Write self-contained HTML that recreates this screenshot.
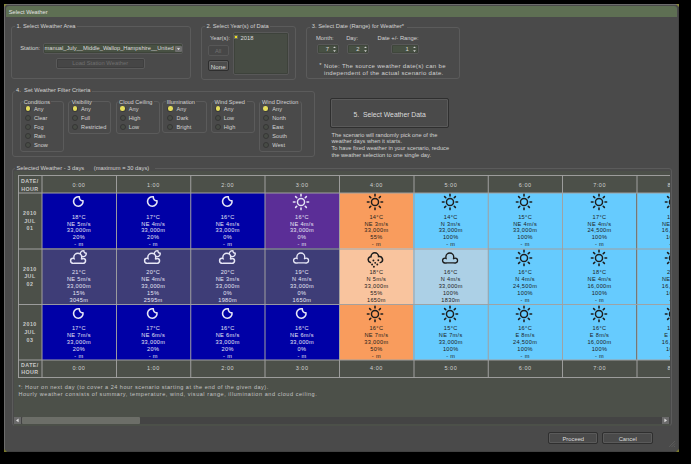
<!DOCTYPE html>
<html><head><meta charset="utf-8"><style>
html,body{margin:0;padding:0}
body{width:691px;height:464px;background:#000;position:relative;overflow:hidden;font-family:"Liberation Sans", sans-serif}
body div, body svg{position:absolute}
.t{white-space:pre;font-family:"Liberation Sans", sans-serif}
</style></head><body>
<div style="left:4px;top:4px;width:675px;height:448px;background:#4a4a4a;border:1px solid #6c6c6c;border-right-color:#424242;border-bottom-color:#424242;box-sizing:border-box;"></div>
<svg style="left:4px;top:4px" width="4" height="4"><path d="M0 0 L3 0 L0 3 Z" fill="#8a8a3a"/></svg>
<svg style="left:675px;top:4px" width="4" height="4"><path d="M4 0 L1 0 L4 3 Z" fill="#8a8a3a"/></svg>
<svg style="left:675px;top:448px" width="4" height="4"><path d="M4 4 L1 4 L4 1 Z" fill="#7a7a2a"/></svg>
<svg style="left:4px;top:448px" width="4" height="4"><path d="M0 4 L3 4 L0 1 Z" fill="#7a7a2a"/></svg>
<div style="left:6px;top:6px;width:671px;height:11px;background:#5e6f53;border-radius:3px 3px 0 0;"></div>
<div class="t" style="left:8.8px;top:9.77px;font-size:5.7px;line-height:5.7px;color:#e2e2e2;">Select Weather</div>
<div style="left:11px;top:26px;width:180px;height:53px;border:1px solid #5b5b5b;border-radius:3px;box-sizing:border-box;"></div>
<div style="left:15.0px;top:23px;width:62.3px;height:6px;background:#4a4a4a"></div>
<div class="t" style="left:16.5px;top:24.13px;font-size:5.75px;line-height:5.75px;color:#d2d2d2;">1. Select Weather Area</div>
<div class="t" style="left:20.2px;top:46.01px;font-size:5.9px;line-height:5.9px;color:#d2d2d2;">Station:</div>
<div style="left:42.8px;top:43.4px;width:140.4px;height:10.4px;background:#485143;border:1px solid #575757;border-radius:2px;box-sizing:border-box;box-shadow:inset 0 0 0 0.7px #3b4138;"></div>
<div class="t" style="left:44.6px;top:46.17px;font-size:5.71px;line-height:5.71px;color:#dcdcdc;">manual_July__Middle_Wallop_Hampshire__United</div>
<div style="left:175px;top:46px;width:6.5px;height:5.8px;background:#6e6e6e;border-radius:1px;"></div>
<svg style="left:176px;top:47px" width="5" height="4"><path d="M1 1.2 L4 1.2 L2.5 3 Z" fill="#eee"/></svg>
<div style="left:55.5px;top:57.8px;width:89.5px;height:11px;border:1px solid #5a5a5a;border-radius:2px;box-sizing:border-box;background:#464646;box-shadow:inset 0 0 0 0.7px #3c3c3c;"></div>
<div class="t" style="left:0.20000000000000284px;width:200px;text-align:center;top:61.09px;font-size:5.8px;line-height:5.8px;color:#6f6f6f;">Load Station Weather</div>
<div style="left:201px;top:26px;width:95px;height:53.5px;border:1px solid #5b5b5b;border-radius:3px;box-sizing:border-box;"></div>
<div style="left:204.9px;top:23px;width:65.3px;height:6px;background:#4a4a4a"></div>
<div class="t" style="left:206.4px;top:24.13px;font-size:5.75px;line-height:5.75px;color:#d2d2d2;">2. Select Year(s) of Data</div>
<div class="t" style="left:-70px;width:300px;text-align:right;top:36.09px;font-size:5.8px;line-height:5.8px;color:#d2d2d2;">Year(s):</div>
<div style="left:232.8px;top:32.2px;width:56px;height:43px;background:#474c44;border:1px solid #585858;border-radius:2px;box-sizing:border-box;box-shadow:inset 0 0 0 0.7px #3b3f38;"></div>
<div style="left:234.2px;top:34.8px;width:4px;height:4px;background:#5a5a3a;box-sizing:border-box;border:1px solid #6d6d5a"></div>
<div style="left:235.2px;top:35.8px;width:2px;height:2px;background:#f0e020"></div>
<div class="t" style="left:240.5px;top:35.89px;font-size:5.8px;line-height:5.8px;color:#dcdcdc;">2018</div>
<div style="left:208px;top:44.5px;width:20.5px;height:11.2px;border:1px solid #575757;border-radius:2px;box-sizing:border-box;background:#474747;"></div>
<div class="t" style="left:118.19999999999999px;width:200px;text-align:center;top:48.79px;font-size:5.8px;line-height:5.8px;color:#707070;">All</div>
<div style="left:208px;top:59.5px;width:20.5px;height:11.4px;border:1px solid #2e2e2e;border-radius:2px;box-sizing:border-box;background:#4c4c4c;box-shadow:inset 0 0 0 1px #5d5d5d;"></div>
<div class="t" style="left:118.19999999999999px;width:200px;text-align:center;top:63.75px;font-size:6.2px;line-height:6.2px;color:#dcdcdc;">None</div>
<div style="left:306px;top:26.5px;width:154px;height:52px;border:1px solid #5b5b5b;border-radius:3px;box-sizing:border-box;"></div>
<div style="left:310.3px;top:23.5px;width:96.5px;height:6px;background:#4a4a4a"></div>
<div class="t" style="left:311.8px;top:24.13px;font-size:5.75px;line-height:5.75px;color:#d2d2d2;">3. Select Date (Range) for Weather*</div>
<div class="t" style="left:316px;top:35.69px;font-size:5.8px;line-height:5.8px;color:#d2d2d2;">Month:</div>
<div class="t" style="left:346.2px;top:35.69px;font-size:5.8px;line-height:5.8px;color:#d2d2d2;">Day:</div>
<div class="t" style="left:377.5px;top:35.69px;font-size:5.8px;line-height:5.8px;color:#d2d2d2;">Date +/- Range:</div>
<div style="left:316.7px;top:43.8px;width:22.2px;height:9.8px;background:#475043;border:1px solid #585858;border-radius:2px;box-sizing:border-box;box-shadow:inset 0 0 0 0.6px #3a3f37;"></div>
<div class="t" style="left:29.099999999999966px;width:300px;text-align:right;top:46.81px;font-size:5.9px;line-height:5.9px;color:#d8d8d8;">7</div>
<svg style="left:332.4px;top:44.5px" width="5" height="8"><path d="M1.1 3.1 L2.5 1.4 L3.9 3.1 Z M1.1 5.2 L2.5 6.9 L3.9 5.2 Z" fill="#cfcfcf"/></svg>
<div style="left:346.7px;top:43.8px;width:22.7px;height:9.8px;background:#475043;border:1px solid #585858;border-radius:2px;box-sizing:border-box;box-shadow:inset 0 0 0 0.6px #3a3f37;"></div>
<div class="t" style="left:59.599999999999966px;width:300px;text-align:right;top:46.81px;font-size:5.9px;line-height:5.9px;color:#d8d8d8;">2</div>
<svg style="left:362.9px;top:44.5px" width="5" height="8"><path d="M1.1 3.1 L2.5 1.4 L3.9 3.1 Z M1.1 5.2 L2.5 6.9 L3.9 5.2 Z" fill="#cfcfcf"/></svg>
<div style="left:391px;top:43.8px;width:27.6px;height:9.8px;background:#475043;border:1px solid #585858;border-radius:2px;box-sizing:border-box;box-shadow:inset 0 0 0 0.6px #3a3f37;"></div>
<div class="t" style="left:108.80000000000001px;width:300px;text-align:right;top:46.81px;font-size:5.9px;line-height:5.9px;color:#d8d8d8;">1</div>
<svg style="left:412.1px;top:44.5px" width="5" height="8"><path d="M1.1 3.1 L2.5 1.4 L3.9 3.1 Z M1.1 5.2 L2.5 6.9 L3.9 5.2 Z" fill="#cfcfcf"/></svg>
<div class="t" style="left:319.2px;top:63.01px;font-size:5.9px;line-height:5.9px;color:#d2d2d2;">*</div>
<div class="t" style="left:324px;top:63.02px;font-size:6.0px;line-height:6.0px;color:#d2d2d2;letter-spacing:0.33px">Note: The source weather date(s) can be</div>
<div class="t" style="left:324px;top:69.72px;font-size:6.0px;line-height:6.0px;color:#d2d2d2;letter-spacing:0.32px">independent of the actual scenario date.</div>
<div style="left:11.5px;top:90.5px;width:303px;height:66px;border:1px solid #5b5b5b;border-radius:3px;box-sizing:border-box;"></div>
<div style="left:14.600000000000001px;top:87.5px;width:77.1px;height:6px;background:#4a4a4a"></div>
<div class="t" style="left:16.1px;top:88.13px;font-size:5.75px;line-height:5.75px;color:#d2d2d2;">4.  Set Weather Filter Criteria</div>
<div style="left:20px;top:101.3px;width:43.6px;height:50.5px;border:1px solid #5b5b5b;border-radius:3px;box-sizing:border-box;"></div>
<div style="left:22.7px;top:99px;width:28.5px;height:6px;background:#4a4a4a"></div>
<div class="t" style="left:23.7px;top:99.76px;font-size:5.6px;line-height:5.6px;color:#d2d2d2;">Conditions</div>
<div style="left:24.95px;top:105.60000000000001px;width:6px;height:6px;border-radius:50%;background:#3a3a3a"></div>
<div style="left:25.75px;top:106.4px;width:4.4px;height:4.4px;border-radius:50%;background:#e4dc5c"></div>
<div class="t" style="left:33.9px;top:107.06px;font-size:5.6px;line-height:5.6px;color:#d2d2d2;">Any</div>
<div style="left:24.95px;top:114.7px;width:6px;height:6px;border-radius:50%;background:#474b45;box-sizing:border-box;border:1px solid #363636"></div>
<div class="t" style="left:33.9px;top:116.16px;font-size:5.6px;line-height:5.6px;color:#d2d2d2;">Clear</div>
<div style="left:24.95px;top:123.80000000000001px;width:6px;height:6px;border-radius:50%;background:#474b45;box-sizing:border-box;border:1px solid #363636"></div>
<div class="t" style="left:33.9px;top:125.26px;font-size:5.6px;line-height:5.6px;color:#d2d2d2;">Fog</div>
<div style="left:24.95px;top:132.89999999999998px;width:6px;height:6px;border-radius:50%;background:#474b45;box-sizing:border-box;border:1px solid #363636"></div>
<div class="t" style="left:33.9px;top:134.36px;font-size:5.6px;line-height:5.6px;color:#d2d2d2;">Rain</div>
<div style="left:24.95px;top:142.0px;width:6px;height:6px;border-radius:50%;background:#474b45;box-sizing:border-box;border:1px solid #363636"></div>
<div class="t" style="left:33.9px;top:143.46px;font-size:5.6px;line-height:5.6px;color:#d2d2d2;">Snow</div>
<div style="left:68.2px;top:101.3px;width:42.8px;height:32.4px;border:1px solid #5b5b5b;border-radius:3px;box-sizing:border-box;"></div>
<div style="left:70.7px;top:99px;width:19px;height:6px;background:#4a4a4a"></div>
<div class="t" style="left:71.7px;top:99.76px;font-size:5.6px;line-height:5.6px;color:#d2d2d2;">Visibility</div>
<div style="left:72.14999999999999px;top:105.60000000000001px;width:6px;height:6px;border-radius:50%;background:#3a3a3a"></div>
<div style="left:72.94999999999999px;top:106.4px;width:4.4px;height:4.4px;border-radius:50%;background:#e4dc5c"></div>
<div class="t" style="left:81.1px;top:107.06px;font-size:5.6px;line-height:5.6px;color:#d2d2d2;">Any</div>
<div style="left:72.14999999999999px;top:114.7px;width:6px;height:6px;border-radius:50%;background:#474b45;box-sizing:border-box;border:1px solid #363636"></div>
<div class="t" style="left:81.1px;top:116.16px;font-size:5.6px;line-height:5.6px;color:#d2d2d2;">Full</div>
<div style="left:72.14999999999999px;top:123.80000000000001px;width:6px;height:6px;border-radius:50%;background:#474b45;box-sizing:border-box;border:1px solid #363636"></div>
<div class="t" style="left:81.1px;top:125.26px;font-size:5.6px;line-height:5.6px;color:#d2d2d2;">Restricted</div>
<div style="left:115.6px;top:101.3px;width:44px;height:32.4px;border:1px solid #5b5b5b;border-radius:3px;box-sizing:border-box;"></div>
<div style="left:118.1px;top:99px;width:35.5px;height:6px;background:#4a4a4a"></div>
<div class="t" style="left:119.1px;top:99.76px;font-size:5.6px;line-height:5.6px;color:#d2d2d2;">Cloud Ceiling</div>
<div style="left:119.55px;top:105.60000000000001px;width:6px;height:6px;border-radius:50%;background:#3a3a3a"></div>
<div style="left:120.35px;top:106.4px;width:4.4px;height:4.4px;border-radius:50%;background:#e4dc5c"></div>
<div class="t" style="left:128.8px;top:107.06px;font-size:5.6px;line-height:5.6px;color:#d2d2d2;">Any</div>
<div style="left:119.55px;top:114.7px;width:6px;height:6px;border-radius:50%;background:#474b45;box-sizing:border-box;border:1px solid #363636"></div>
<div class="t" style="left:128.8px;top:116.16px;font-size:5.6px;line-height:5.6px;color:#d2d2d2;">High</div>
<div style="left:119.55px;top:123.80000000000001px;width:6px;height:6px;border-radius:50%;background:#474b45;box-sizing:border-box;border:1px solid #363636"></div>
<div class="t" style="left:128.8px;top:125.26px;font-size:5.6px;line-height:5.6px;color:#d2d2d2;">Low</div>
<div style="left:162.3px;top:101.3px;width:44.7px;height:31.6px;border:1px solid #5b5b5b;border-radius:3px;box-sizing:border-box;"></div>
<div style="left:165.7px;top:99px;width:30.5px;height:6px;background:#4a4a4a"></div>
<div class="t" style="left:166.7px;top:99.76px;font-size:5.6px;line-height:5.6px;color:#d2d2d2;">Illumination</div>
<div style="left:167.45000000000002px;top:105.60000000000001px;width:6px;height:6px;border-radius:50%;background:#3a3a3a"></div>
<div style="left:168.25000000000003px;top:106.4px;width:4.4px;height:4.4px;border-radius:50%;background:#e4dc5c"></div>
<div class="t" style="left:176.6px;top:107.06px;font-size:5.6px;line-height:5.6px;color:#d2d2d2;">Any</div>
<div style="left:167.45000000000002px;top:114.7px;width:6px;height:6px;border-radius:50%;background:#474b45;box-sizing:border-box;border:1px solid #363636"></div>
<div class="t" style="left:176.6px;top:116.16px;font-size:5.6px;line-height:5.6px;color:#d2d2d2;">Dark</div>
<div style="left:167.45000000000002px;top:123.80000000000001px;width:6px;height:6px;border-radius:50%;background:#474b45;box-sizing:border-box;border:1px solid #363636"></div>
<div class="t" style="left:176.6px;top:125.26px;font-size:5.6px;line-height:5.6px;color:#d2d2d2;">Bright</div>
<div style="left:211px;top:101.3px;width:43.5px;height:31.6px;border:1px solid #5b5b5b;border-radius:3px;box-sizing:border-box;"></div>
<div style="left:213.5px;top:99px;width:33.5px;height:6px;background:#4a4a4a"></div>
<div class="t" style="left:214.5px;top:99.76px;font-size:5.6px;line-height:5.6px;color:#d2d2d2;">Wind Speed</div>
<div style="left:214.95000000000002px;top:105.60000000000001px;width:6px;height:6px;border-radius:50%;background:#3a3a3a"></div>
<div style="left:215.75000000000003px;top:106.4px;width:4.4px;height:4.4px;border-radius:50%;background:#e4dc5c"></div>
<div class="t" style="left:223.8px;top:107.06px;font-size:5.6px;line-height:5.6px;color:#d2d2d2;">Any</div>
<div style="left:214.95000000000002px;top:114.7px;width:6px;height:6px;border-radius:50%;background:#474b45;box-sizing:border-box;border:1px solid #363636"></div>
<div class="t" style="left:223.8px;top:116.16px;font-size:5.6px;line-height:5.6px;color:#d2d2d2;">Low</div>
<div style="left:214.95000000000002px;top:123.80000000000001px;width:6px;height:6px;border-radius:50%;background:#474b45;box-sizing:border-box;border:1px solid #363636"></div>
<div class="t" style="left:223.8px;top:125.26px;font-size:5.6px;line-height:5.6px;color:#d2d2d2;">High</div>
<div style="left:258.7px;top:101.3px;width:43.8px;height:50.5px;border:1px solid #5b5b5b;border-radius:3px;box-sizing:border-box;"></div>
<div style="left:261px;top:99px;width:38.5px;height:6px;background:#4a4a4a"></div>
<div class="t" style="left:262px;top:99.76px;font-size:5.6px;line-height:5.6px;color:#d2d2d2;">Wind Direction</div>
<div style="left:262.65000000000003px;top:105.60000000000001px;width:6px;height:6px;border-radius:50%;background:#3a3a3a"></div>
<div style="left:263.45000000000005px;top:106.4px;width:4.4px;height:4.4px;border-radius:50%;background:#e4dc5c"></div>
<div class="t" style="left:272.3px;top:107.06px;font-size:5.6px;line-height:5.6px;color:#d2d2d2;">Any</div>
<div style="left:262.65000000000003px;top:114.7px;width:6px;height:6px;border-radius:50%;background:#474b45;box-sizing:border-box;border:1px solid #363636"></div>
<div class="t" style="left:272.3px;top:116.16px;font-size:5.6px;line-height:5.6px;color:#d2d2d2;">North</div>
<div style="left:262.65000000000003px;top:123.80000000000001px;width:6px;height:6px;border-radius:50%;background:#474b45;box-sizing:border-box;border:1px solid #363636"></div>
<div class="t" style="left:272.3px;top:125.26px;font-size:5.6px;line-height:5.6px;color:#d2d2d2;">East</div>
<div style="left:262.65000000000003px;top:132.89999999999998px;width:6px;height:6px;border-radius:50%;background:#474b45;box-sizing:border-box;border:1px solid #363636"></div>
<div class="t" style="left:272.3px;top:134.36px;font-size:5.6px;line-height:5.6px;color:#d2d2d2;">South</div>
<div style="left:262.65000000000003px;top:142.0px;width:6px;height:6px;border-radius:50%;background:#474b45;box-sizing:border-box;border:1px solid #363636"></div>
<div class="t" style="left:272.3px;top:143.46px;font-size:5.6px;line-height:5.6px;color:#d2d2d2;">West</div>
<div style="left:330px;top:98.2px;width:119px;height:29.8px;border:1px solid #2f2f2f;border-radius:2px;box-sizing:border-box;background:#4a4a4a;box-shadow:inset 0 0 0 1px #5a5a5a;"></div>
<div class="t" style="left:289.6px;width:200px;text-align:center;top:111.62px;font-size:6.83px;line-height:6.83px;color:#dcdcdc;">5.&nbsp;&nbsp;Select Weather Data</div>
<div class="t" style="left:331.5px;top:132.97px;font-size:5.7px;line-height:5.7px;color:#d2d2d2;">The scenario will randomly pick one of the</div>
<div class="t" style="left:331.5px;top:139.17px;font-size:5.7px;line-height:5.7px;color:#d2d2d2;">weather days when it starts.</div>
<div class="t" style="left:331.5px;top:146.17px;font-size:5.7px;line-height:5.7px;color:#d2d2d2;">To have fixed weather in your scenario, reduce</div>
<div class="t" style="left:331.5px;top:152.67px;font-size:5.7px;line-height:5.7px;color:#d2d2d2;">the weather selection to one single day.</div>
<div style="left:11.5px;top:168px;width:660.5px;height:258px;border:1px solid #5b5b5b;border-radius:3px;box-sizing:border-box;"></div>
<div style="left:13.5px;top:171px;width:656.5px;height:254.5px;background:#4c5049;"></div>
<div style="left:15px;top:165px;width:140px;height:6px;background:#4a4a4a"></div>
<div class="t" style="left:16.5px;top:166.23px;font-size:5.75px;line-height:5.75px;color:#d2d2d2;">Selected Weather - 3 days&nbsp;&nbsp;&nbsp;&nbsp;&nbsp;&nbsp;(maximum = 30 days)</div>
<div style="left:13.5px;top:171px;width:656px;height:210px;overflow:hidden">
<div style="left:28.00px;top:21.50px;width:74.38px;height:55.75px;background:#0000a6"></div>
<div style="left:102.38px;top:21.50px;width:74.38px;height:55.75px;background:#0000a6"></div>
<div style="left:176.75px;top:21.50px;width:74.38px;height:55.75px;background:#0000a6"></div>
<div style="left:251.12px;top:21.50px;width:74.38px;height:55.75px;background:#5b2e97"></div>
<div style="left:325.50px;top:21.50px;width:74.38px;height:55.75px;background:#f99c5d"></div>
<div style="left:399.88px;top:21.50px;width:74.38px;height:55.75px;background:#66cbfe"></div>
<div style="left:474.25px;top:21.50px;width:74.38px;height:55.75px;background:#66cbfe"></div>
<div style="left:548.62px;top:21.50px;width:74.38px;height:55.75px;background:#66cbfe"></div>
<div style="left:623.00px;top:21.50px;width:74.38px;height:55.75px;background:#66cbfe"></div>
<div style="left:28.00px;top:77.25px;width:74.38px;height:55.75px;background:#3e3d77"></div>
<div style="left:102.38px;top:77.25px;width:74.38px;height:55.75px;background:#3e3d77"></div>
<div style="left:176.75px;top:77.25px;width:74.38px;height:55.75px;background:#3e3d77"></div>
<div style="left:251.12px;top:77.25px;width:74.38px;height:55.75px;background:#3e3d77"></div>
<div style="left:325.50px;top:77.25px;width:74.38px;height:55.75px;background:#f9c49e"></div>
<div style="left:399.88px;top:77.25px;width:74.38px;height:55.75px;background:#acd0e6"></div>
<div style="left:474.25px;top:77.25px;width:74.38px;height:55.75px;background:#66cbfe"></div>
<div style="left:548.62px;top:77.25px;width:74.38px;height:55.75px;background:#66cbfe"></div>
<div style="left:623.00px;top:77.25px;width:74.38px;height:55.75px;background:#66cbfe"></div>
<div style="left:28.00px;top:133.00px;width:74.38px;height:55.50px;background:#0000a6"></div>
<div style="left:102.38px;top:133.00px;width:74.38px;height:55.50px;background:#0000a6"></div>
<div style="left:176.75px;top:133.00px;width:74.38px;height:55.50px;background:#0000a6"></div>
<div style="left:251.12px;top:133.00px;width:74.38px;height:55.50px;background:#0000a6"></div>
<div style="left:325.50px;top:133.00px;width:74.38px;height:55.50px;background:#f99c5d"></div>
<div style="left:399.88px;top:133.00px;width:74.38px;height:55.50px;background:#66cbfe"></div>
<div style="left:474.25px;top:133.00px;width:74.38px;height:55.50px;background:#66cbfe"></div>
<div style="left:548.62px;top:133.00px;width:74.38px;height:55.50px;background:#66cbfe"></div>
<div style="left:623.00px;top:133.00px;width:74.38px;height:55.50px;background:#66cbfe"></div>
<div style="left:4.50px;top:4.00px;width:682.00px;height:1.00px;background:rgba(160,160,160,0.95)"></div>
<div style="left:4.50px;top:21.00px;width:682.00px;height:2.00px;background:rgba(160,160,160,0.5)"></div>
<div style="left:4.50px;top:77.00px;width:682.00px;height:2.00px;background:rgba(160,160,160,0.5)"></div>
<div style="left:4.50px;top:133.00px;width:682.00px;height:1.00px;background:rgba(160,160,160,0.95)"></div>
<div style="left:4.50px;top:188.00px;width:682.00px;height:2.00px;background:rgba(160,160,160,0.5)"></div>
<div style="left:4.50px;top:206.00px;width:682.00px;height:1.00px;background:rgba(160,160,160,0.95)"></div>
<div style="left:4.50px;top:4.00px;width:1.00px;height:202.50px;background:rgba(160,160,160,0.95)"></div>
<div style="left:27.50px;top:4.00px;width:2.00px;height:202.50px;background:rgba(160,160,160,0.5)"></div>
<div style="left:102.50px;top:4.00px;width:1.00px;height:202.50px;background:rgba(160,160,160,0.95)"></div>
<div style="left:176.50px;top:4.00px;width:1.00px;height:202.50px;background:rgba(160,160,160,0.75)"></div>
<div style="left:177.50px;top:4.00px;width:1.00px;height:202.50px;background:rgba(160,160,160,0.25)"></div>
<div style="left:250.50px;top:4.00px;width:2.00px;height:202.50px;background:rgba(160,160,160,0.5)"></div>
<div style="left:325.50px;top:4.00px;width:1.00px;height:202.50px;background:rgba(160,160,160,0.95)"></div>
<div style="left:399.50px;top:4.00px;width:2.00px;height:202.50px;background:rgba(160,160,160,0.5)"></div>
<div style="left:473.50px;top:4.00px;width:1.00px;height:202.50px;background:rgba(160,160,160,0.25)"></div>
<div style="left:474.50px;top:4.00px;width:1.00px;height:202.50px;background:rgba(160,160,160,0.75)"></div>
<div style="left:548.50px;top:4.00px;width:1.00px;height:202.50px;background:rgba(160,160,160,0.95)"></div>
<div style="left:622.50px;top:4.00px;width:2.00px;height:202.50px;background:rgba(160,160,160,0.5)"></div>
<div style="left:697.50px;top:4.00px;width:1.00px;height:202.50px;background:rgba(160,160,160,0.95)"></div>
</div>
<div style="left:13.5px;top:171px;width:656px;height:210px;overflow:hidden">
<svg style="left:54.4875px;top:21.099999999999994px;overflow:visible" width="20" height="20"><g transform="translate(10,10)"><g transform="translate(0.3,-0.5)"><path d="M0.99,-4.65 A4.75,4.75 0 1 0 4.7,-0.66 A3.6,3.6 0 0 1 0.99,-4.65 Z" fill="none" stroke="#e6e6f6" stroke-width="1.6" stroke-linejoin="round"/></g></g></svg>
<div class="t" style="left:25.36px;width:80px;text-align:center;top:43.66px;font-size:5.6px;line-height:5.6px;color:#e6e6f6;letter-spacing:0.34px">18°C</div>
<div class="t" style="left:25.36px;width:80px;text-align:center;top:50.51px;font-size:5.6px;line-height:5.6px;color:#e6e6f6;letter-spacing:0.34px">NE 5m/s</div>
<div class="t" style="left:25.36px;width:80px;text-align:center;top:57.36px;font-size:5.6px;line-height:5.6px;color:#e6e6f6;letter-spacing:0.34px">33,000m</div>
<div class="t" style="left:25.36px;width:80px;text-align:center;top:64.21px;font-size:5.6px;line-height:5.6px;color:#e6e6f6;letter-spacing:0.34px">20%</div>
<div class="t" style="left:25.36px;width:80px;text-align:center;top:71.06px;font-size:5.6px;line-height:5.6px;color:#e6e6f6;letter-spacing:0.34px">- m</div>
<svg style="left:128.8625px;top:21.099999999999994px;overflow:visible" width="20" height="20"><g transform="translate(10,10)"><g transform="translate(0.3,-0.5)"><path d="M0.99,-4.65 A4.75,4.75 0 1 0 4.7,-0.66 A3.6,3.6 0 0 1 0.99,-4.65 Z" fill="none" stroke="#e6e6f6" stroke-width="1.6" stroke-linejoin="round"/></g></g></svg>
<div class="t" style="left:99.73px;width:80px;text-align:center;top:43.66px;font-size:5.6px;line-height:5.6px;color:#e6e6f6;letter-spacing:0.34px">17°C</div>
<div class="t" style="left:99.73px;width:80px;text-align:center;top:50.51px;font-size:5.6px;line-height:5.6px;color:#e6e6f6;letter-spacing:0.34px">NE 4m/s</div>
<div class="t" style="left:99.73px;width:80px;text-align:center;top:57.36px;font-size:5.6px;line-height:5.6px;color:#e6e6f6;letter-spacing:0.34px">33,000m</div>
<div class="t" style="left:99.73px;width:80px;text-align:center;top:64.21px;font-size:5.6px;line-height:5.6px;color:#e6e6f6;letter-spacing:0.34px">20%</div>
<div class="t" style="left:99.73px;width:80px;text-align:center;top:71.06px;font-size:5.6px;line-height:5.6px;color:#e6e6f6;letter-spacing:0.34px">- m</div>
<svg style="left:203.2375px;top:21.099999999999994px;overflow:visible" width="20" height="20"><g transform="translate(10,10)"><g transform="translate(0.3,-0.5)"><path d="M0.99,-4.65 A4.75,4.75 0 1 0 4.7,-0.66 A3.6,3.6 0 0 1 0.99,-4.65 Z" fill="none" stroke="#e6e6f6" stroke-width="1.6" stroke-linejoin="round"/></g></g></svg>
<div class="t" style="left:174.11px;width:80px;text-align:center;top:43.66px;font-size:5.6px;line-height:5.6px;color:#e6e6f6;letter-spacing:0.34px">16°C</div>
<div class="t" style="left:174.11px;width:80px;text-align:center;top:50.51px;font-size:5.6px;line-height:5.6px;color:#e6e6f6;letter-spacing:0.34px">NE 4m/s</div>
<div class="t" style="left:174.11px;width:80px;text-align:center;top:57.36px;font-size:5.6px;line-height:5.6px;color:#e6e6f6;letter-spacing:0.34px">33,000m</div>
<div class="t" style="left:174.11px;width:80px;text-align:center;top:64.21px;font-size:5.6px;line-height:5.6px;color:#e6e6f6;letter-spacing:0.34px">0%</div>
<div class="t" style="left:174.11px;width:80px;text-align:center;top:71.06px;font-size:5.6px;line-height:5.6px;color:#e6e6f6;letter-spacing:0.34px">- m</div>
<svg style="left:277.6125px;top:21.099999999999994px;overflow:visible" width="20" height="20"><g transform="translate(10,10)"><circle cx="0" cy="0" r="3.55" fill="none" stroke="#e6e6f6" stroke-width="1.45"/><path d="M6.00,0.00 L7.60,0.00 M4.24,4.24 L5.37,5.37 M0.00,6.00 L0.00,7.60 M-4.24,4.24 L-5.37,5.37 M-6.00,0.00 L-7.60,0.00 M-4.24,-4.24 L-5.37,-5.37 M-0.00,-6.00 L-0.00,-7.60 M4.24,-4.24 L5.37,-5.37" stroke="#e6e6f6" stroke-width="1.6" stroke-linecap="round"/></g></svg>
<div class="t" style="left:248.48px;width:80px;text-align:center;top:43.66px;font-size:5.6px;line-height:5.6px;color:#e6e6f6;letter-spacing:0.34px">16°C</div>
<div class="t" style="left:248.48px;width:80px;text-align:center;top:50.51px;font-size:5.6px;line-height:5.6px;color:#e6e6f6;letter-spacing:0.34px">NE 4m/s</div>
<div class="t" style="left:248.48px;width:80px;text-align:center;top:57.36px;font-size:5.6px;line-height:5.6px;color:#e6e6f6;letter-spacing:0.34px">33,000m</div>
<div class="t" style="left:248.48px;width:80px;text-align:center;top:64.21px;font-size:5.6px;line-height:5.6px;color:#e6e6f6;letter-spacing:0.34px">0%</div>
<div class="t" style="left:248.48px;width:80px;text-align:center;top:71.06px;font-size:5.6px;line-height:5.6px;color:#e6e6f6;letter-spacing:0.34px">- m</div>
<svg style="left:351.9875px;top:21.099999999999994px;overflow:visible" width="20" height="20"><g transform="translate(10,10)"><circle cx="0" cy="0" r="3.55" fill="none" stroke="#1c1c1c" stroke-width="1.45"/><path d="M6.00,0.00 L7.60,0.00 M4.24,4.24 L5.37,5.37 M0.00,6.00 L0.00,7.60 M-4.24,4.24 L-5.37,5.37 M-6.00,0.00 L-7.60,0.00 M-4.24,-4.24 L-5.37,-5.37 M-0.00,-6.00 L-0.00,-7.60 M4.24,-4.24 L5.37,-5.37" stroke="#1c1c1c" stroke-width="1.6" stroke-linecap="round"/></g></svg>
<div class="t" style="left:322.86px;width:80px;text-align:center;top:43.66px;font-size:5.6px;line-height:5.6px;color:#1c1c1c;letter-spacing:0.34px">14°C</div>
<div class="t" style="left:322.86px;width:80px;text-align:center;top:50.51px;font-size:5.6px;line-height:5.6px;color:#1c1c1c;letter-spacing:0.34px">NE 3m/s</div>
<div class="t" style="left:322.86px;width:80px;text-align:center;top:57.36px;font-size:5.6px;line-height:5.6px;color:#1c1c1c;letter-spacing:0.34px">33,000m</div>
<div class="t" style="left:322.86px;width:80px;text-align:center;top:64.21px;font-size:5.6px;line-height:5.6px;color:#1c1c1c;letter-spacing:0.34px">55%</div>
<div class="t" style="left:322.86px;width:80px;text-align:center;top:71.06px;font-size:5.6px;line-height:5.6px;color:#1c1c1c;letter-spacing:0.34px">- m</div>
<svg style="left:426.3625px;top:21.099999999999994px;overflow:visible" width="20" height="20"><g transform="translate(10,10)"><circle cx="0" cy="0" r="3.55" fill="none" stroke="#1c1c1c" stroke-width="1.45"/><path d="M6.00,0.00 L7.60,0.00 M4.24,4.24 L5.37,5.37 M0.00,6.00 L0.00,7.60 M-4.24,4.24 L-5.37,5.37 M-6.00,0.00 L-7.60,0.00 M-4.24,-4.24 L-5.37,-5.37 M-0.00,-6.00 L-0.00,-7.60 M4.24,-4.24 L5.37,-5.37" stroke="#1c1c1c" stroke-width="1.6" stroke-linecap="round"/></g></svg>
<div class="t" style="left:397.23px;width:80px;text-align:center;top:43.66px;font-size:5.6px;line-height:5.6px;color:#1c1c1c;letter-spacing:0.34px">14°C</div>
<div class="t" style="left:397.23px;width:80px;text-align:center;top:50.51px;font-size:5.6px;line-height:5.6px;color:#1c1c1c;letter-spacing:0.34px">N 3m/s</div>
<div class="t" style="left:397.23px;width:80px;text-align:center;top:57.36px;font-size:5.6px;line-height:5.6px;color:#1c1c1c;letter-spacing:0.34px">33,000m</div>
<div class="t" style="left:397.23px;width:80px;text-align:center;top:64.21px;font-size:5.6px;line-height:5.6px;color:#1c1c1c;letter-spacing:0.34px">100%</div>
<div class="t" style="left:397.23px;width:80px;text-align:center;top:71.06px;font-size:5.6px;line-height:5.6px;color:#1c1c1c;letter-spacing:0.34px">- m</div>
<svg style="left:500.73749999999995px;top:21.099999999999994px;overflow:visible" width="20" height="20"><g transform="translate(10,10)"><circle cx="0" cy="0" r="3.55" fill="none" stroke="#1c1c1c" stroke-width="1.45"/><path d="M6.00,0.00 L7.60,0.00 M4.24,4.24 L5.37,5.37 M0.00,6.00 L0.00,7.60 M-4.24,4.24 L-5.37,5.37 M-6.00,0.00 L-7.60,0.00 M-4.24,-4.24 L-5.37,-5.37 M-0.00,-6.00 L-0.00,-7.60 M4.24,-4.24 L5.37,-5.37" stroke="#1c1c1c" stroke-width="1.6" stroke-linecap="round"/></g></svg>
<div class="t" style="left:471.61px;width:80px;text-align:center;top:43.66px;font-size:5.6px;line-height:5.6px;color:#1c1c1c;letter-spacing:0.34px">15°C</div>
<div class="t" style="left:471.61px;width:80px;text-align:center;top:50.51px;font-size:5.6px;line-height:5.6px;color:#1c1c1c;letter-spacing:0.34px">NE 4m/s</div>
<div class="t" style="left:471.61px;width:80px;text-align:center;top:57.36px;font-size:5.6px;line-height:5.6px;color:#1c1c1c;letter-spacing:0.34px">33,000m</div>
<div class="t" style="left:471.61px;width:80px;text-align:center;top:64.21px;font-size:5.6px;line-height:5.6px;color:#1c1c1c;letter-spacing:0.34px">100%</div>
<div class="t" style="left:471.61px;width:80px;text-align:center;top:71.06px;font-size:5.6px;line-height:5.6px;color:#1c1c1c;letter-spacing:0.34px">- m</div>
<svg style="left:575.1125px;top:21.099999999999994px;overflow:visible" width="20" height="20"><g transform="translate(10,10)"><circle cx="0" cy="0" r="3.55" fill="none" stroke="#1c1c1c" stroke-width="1.45"/><path d="M6.00,0.00 L7.60,0.00 M4.24,4.24 L5.37,5.37 M0.00,6.00 L0.00,7.60 M-4.24,4.24 L-5.37,5.37 M-6.00,0.00 L-7.60,0.00 M-4.24,-4.24 L-5.37,-5.37 M-0.00,-6.00 L-0.00,-7.60 M4.24,-4.24 L5.37,-5.37" stroke="#1c1c1c" stroke-width="1.6" stroke-linecap="round"/></g></svg>
<div class="t" style="left:545.98px;width:80px;text-align:center;top:43.66px;font-size:5.6px;line-height:5.6px;color:#1c1c1c;letter-spacing:0.34px">17°C</div>
<div class="t" style="left:545.98px;width:80px;text-align:center;top:50.51px;font-size:5.6px;line-height:5.6px;color:#1c1c1c;letter-spacing:0.34px">NE 4m/s</div>
<div class="t" style="left:545.98px;width:80px;text-align:center;top:57.36px;font-size:5.6px;line-height:5.6px;color:#1c1c1c;letter-spacing:0.34px">24,500m</div>
<div class="t" style="left:545.98px;width:80px;text-align:center;top:64.21px;font-size:5.6px;line-height:5.6px;color:#1c1c1c;letter-spacing:0.34px">100%</div>
<div class="t" style="left:545.98px;width:80px;text-align:center;top:71.06px;font-size:5.6px;line-height:5.6px;color:#1c1c1c;letter-spacing:0.34px">- m</div>
<svg style="left:649.4875px;top:21.099999999999994px;overflow:visible" width="20" height="20"><g transform="translate(10,10)"><circle cx="0" cy="0" r="3.55" fill="none" stroke="#1c1c1c" stroke-width="1.45"/><path d="M6.00,0.00 L7.60,0.00 M4.24,4.24 L5.37,5.37 M0.00,6.00 L0.00,7.60 M-4.24,4.24 L-5.37,5.37 M-6.00,0.00 L-7.60,0.00 M-4.24,-4.24 L-5.37,-5.37 M-0.00,-6.00 L-0.00,-7.60 M4.24,-4.24 L5.37,-5.37" stroke="#1c1c1c" stroke-width="1.6" stroke-linecap="round"/></g></svg>
<div class="t" style="left:620.36px;width:80px;text-align:center;top:43.66px;font-size:5.6px;line-height:5.6px;color:#1c1c1c;letter-spacing:0.34px">18°C</div>
<div class="t" style="left:620.36px;width:80px;text-align:center;top:50.51px;font-size:5.6px;line-height:5.6px;color:#1c1c1c;letter-spacing:0.34px">NE 4m/s</div>
<div class="t" style="left:620.36px;width:80px;text-align:center;top:57.36px;font-size:5.6px;line-height:5.6px;color:#1c1c1c;letter-spacing:0.34px">16,000m</div>
<div class="t" style="left:620.36px;width:80px;text-align:center;top:64.21px;font-size:5.6px;line-height:5.6px;color:#1c1c1c;letter-spacing:0.34px">100%</div>
<div class="t" style="left:620.36px;width:80px;text-align:center;top:71.06px;font-size:5.6px;line-height:5.6px;color:#1c1c1c;letter-spacing:0.34px">- m</div>
<svg style="left:54.4875px;top:76.85000000000002px;overflow:visible" width="20" height="20"><g transform="translate(10,10)"><g transform="translate(5.3,-4.3) scale(0.62)"><path d="M0.99,-4.65 A4.75,4.75 0 1 0 4.7,-0.66 A3.6,3.6 0 0 1 0.99,-4.65 Z" fill="none" stroke="#e6e6f6" stroke-width="2.2"/></g><g fill="#e6e6f6" stroke="#e6e6f6" stroke-width="3.00"><circle cx="-5.00" cy="2.75" r="1.65"/><circle cx="-0.20" cy="-0.70" r="3.20"/><circle cx="5.20" cy="2.80" r="1.60"/><path stroke-linejoin="round" d="M-5.00,2.75 L-0.20,-0.70 L5.20,2.80 L5.20,4.40 L-5.00,4.40 Z"/></g><g fill="#3e3d77"><circle cx="-5.00" cy="2.75" r="1.65"/><circle cx="-0.20" cy="-0.70" r="3.20"/><circle cx="5.20" cy="2.80" r="1.60"/><path stroke-linejoin="round" d="M-5.00,2.75 L-0.20,-0.70 L5.20,2.80 L5.20,4.40 L-5.00,4.40 Z"/></g></g></svg>
<div class="t" style="left:25.36px;width:80px;text-align:center;top:99.41px;font-size:5.6px;line-height:5.6px;color:#e6e6f6;letter-spacing:0.34px">21°C</div>
<div class="t" style="left:25.36px;width:80px;text-align:center;top:106.26px;font-size:5.6px;line-height:5.6px;color:#e6e6f6;letter-spacing:0.34px">NE 5m/s</div>
<div class="t" style="left:25.36px;width:80px;text-align:center;top:113.11px;font-size:5.6px;line-height:5.6px;color:#e6e6f6;letter-spacing:0.34px">33,000m</div>
<div class="t" style="left:25.36px;width:80px;text-align:center;top:119.96px;font-size:5.6px;line-height:5.6px;color:#e6e6f6;letter-spacing:0.34px">15%</div>
<div class="t" style="left:25.36px;width:80px;text-align:center;top:126.81px;font-size:5.6px;line-height:5.6px;color:#e6e6f6;letter-spacing:0.34px">3045m</div>
<svg style="left:128.8625px;top:76.85000000000002px;overflow:visible" width="20" height="20"><g transform="translate(10,10)"><g transform="translate(5.3,-4.3) scale(0.62)"><path d="M0.99,-4.65 A4.75,4.75 0 1 0 4.7,-0.66 A3.6,3.6 0 0 1 0.99,-4.65 Z" fill="none" stroke="#e6e6f6" stroke-width="2.2"/></g><g fill="#e6e6f6" stroke="#e6e6f6" stroke-width="3.00"><circle cx="-5.00" cy="2.75" r="1.65"/><circle cx="-0.20" cy="-0.70" r="3.20"/><circle cx="5.20" cy="2.80" r="1.60"/><path stroke-linejoin="round" d="M-5.00,2.75 L-0.20,-0.70 L5.20,2.80 L5.20,4.40 L-5.00,4.40 Z"/></g><g fill="#3e3d77"><circle cx="-5.00" cy="2.75" r="1.65"/><circle cx="-0.20" cy="-0.70" r="3.20"/><circle cx="5.20" cy="2.80" r="1.60"/><path stroke-linejoin="round" d="M-5.00,2.75 L-0.20,-0.70 L5.20,2.80 L5.20,4.40 L-5.00,4.40 Z"/></g></g></svg>
<div class="t" style="left:99.73px;width:80px;text-align:center;top:99.41px;font-size:5.6px;line-height:5.6px;color:#e6e6f6;letter-spacing:0.34px">20°C</div>
<div class="t" style="left:99.73px;width:80px;text-align:center;top:106.26px;font-size:5.6px;line-height:5.6px;color:#e6e6f6;letter-spacing:0.34px">NE 4m/s</div>
<div class="t" style="left:99.73px;width:80px;text-align:center;top:113.11px;font-size:5.6px;line-height:5.6px;color:#e6e6f6;letter-spacing:0.34px">33,000m</div>
<div class="t" style="left:99.73px;width:80px;text-align:center;top:119.96px;font-size:5.6px;line-height:5.6px;color:#e6e6f6;letter-spacing:0.34px">15%</div>
<div class="t" style="left:99.73px;width:80px;text-align:center;top:126.81px;font-size:5.6px;line-height:5.6px;color:#e6e6f6;letter-spacing:0.34px">2595m</div>
<svg style="left:203.2375px;top:76.85000000000002px;overflow:visible" width="20" height="20"><g transform="translate(10,10)"><g transform="translate(5.3,-4.3) scale(0.62)"><path d="M0.99,-4.65 A4.75,4.75 0 1 0 4.7,-0.66 A3.6,3.6 0 0 1 0.99,-4.65 Z" fill="none" stroke="#e6e6f6" stroke-width="2.2"/></g><g fill="#e6e6f6" stroke="#e6e6f6" stroke-width="3.00"><circle cx="-5.00" cy="2.75" r="1.65"/><circle cx="-0.20" cy="-0.70" r="3.20"/><circle cx="5.20" cy="2.80" r="1.60"/><path stroke-linejoin="round" d="M-5.00,2.75 L-0.20,-0.70 L5.20,2.80 L5.20,4.40 L-5.00,4.40 Z"/></g><g fill="#3e3d77"><circle cx="-5.00" cy="2.75" r="1.65"/><circle cx="-0.20" cy="-0.70" r="3.20"/><circle cx="5.20" cy="2.80" r="1.60"/><path stroke-linejoin="round" d="M-5.00,2.75 L-0.20,-0.70 L5.20,2.80 L5.20,4.40 L-5.00,4.40 Z"/></g></g></svg>
<div class="t" style="left:174.11px;width:80px;text-align:center;top:99.41px;font-size:5.6px;line-height:5.6px;color:#e6e6f6;letter-spacing:0.34px">20°C</div>
<div class="t" style="left:174.11px;width:80px;text-align:center;top:106.26px;font-size:5.6px;line-height:5.6px;color:#e6e6f6;letter-spacing:0.34px">NE 3m/s</div>
<div class="t" style="left:174.11px;width:80px;text-align:center;top:113.11px;font-size:5.6px;line-height:5.6px;color:#e6e6f6;letter-spacing:0.34px">33,000m</div>
<div class="t" style="left:174.11px;width:80px;text-align:center;top:119.96px;font-size:5.6px;line-height:5.6px;color:#e6e6f6;letter-spacing:0.34px">0%</div>
<div class="t" style="left:174.11px;width:80px;text-align:center;top:126.81px;font-size:5.6px;line-height:5.6px;color:#e6e6f6;letter-spacing:0.34px">1980m</div>
<svg style="left:277.6125px;top:76.85000000000002px;overflow:visible" width="20" height="20"><g transform="translate(10,10)"><g fill="#e6e6f6" stroke="#e6e6f6" stroke-width="2.70"><circle cx="-5.00" cy="2.45" r="1.72"/><circle cx="-0.20" cy="-1.00" r="3.28"/><circle cx="5.20" cy="2.50" r="1.68"/><path stroke-linejoin="round" d="M-5.00,2.45 L-0.20,-1.00 L5.20,2.50 L5.20,4.17 L-5.00,4.17 Z"/></g><g fill="#3e3d77"><circle cx="-5.00" cy="2.45" r="1.72"/><circle cx="-0.20" cy="-1.00" r="3.28"/><circle cx="5.20" cy="2.50" r="1.68"/><path stroke-linejoin="round" d="M-5.00,2.45 L-0.20,-1.00 L5.20,2.50 L5.20,4.17 L-5.00,4.17 Z"/></g></g></svg>
<div class="t" style="left:248.48px;width:80px;text-align:center;top:99.41px;font-size:5.6px;line-height:5.6px;color:#e6e6f6;letter-spacing:0.34px">19°C</div>
<div class="t" style="left:248.48px;width:80px;text-align:center;top:106.26px;font-size:5.6px;line-height:5.6px;color:#e6e6f6;letter-spacing:0.34px">N 4m/s</div>
<div class="t" style="left:248.48px;width:80px;text-align:center;top:113.11px;font-size:5.6px;line-height:5.6px;color:#e6e6f6;letter-spacing:0.34px">33,000m</div>
<div class="t" style="left:248.48px;width:80px;text-align:center;top:119.96px;font-size:5.6px;line-height:5.6px;color:#e6e6f6;letter-spacing:0.34px">0%</div>
<div class="t" style="left:248.48px;width:80px;text-align:center;top:126.81px;font-size:5.6px;line-height:5.6px;color:#e6e6f6;letter-spacing:0.34px">1650m</div>
<svg style="left:351.9875px;top:76.85000000000002px;overflow:visible" width="20" height="20"><g transform="translate(10,10)"><path d="M-4.6,4.5 A2.95,2.95 0 0 1 -4.0,-1.3 A3.72,3.72 0 0 1 3.6,-1.4 A3.1,3.1 0 0 1 5.2,4.6" fill="none" stroke="#1c1c1c" stroke-width="1.5" stroke-linecap="round"/><circle cx="-1.6" cy="2.55" r="0.95" fill="#1c1c1c"/><circle cx="3.3" cy="2.25" r="0.95" fill="#1c1c1c"/><circle cx="0.2" cy="4.85" r="0.95" fill="#1c1c1c"/><circle cx="-2.9" cy="6.45" r="0.95" fill="#1c1c1c"/><circle cx="2.3" cy="6.45" r="0.95" fill="#1c1c1c"/><circle cx="-1.1" cy="8.75" r="0.95" fill="#1c1c1c"/></g></svg>
<div class="t" style="left:322.86px;width:80px;text-align:center;top:99.41px;font-size:5.6px;line-height:5.6px;color:#1c1c1c;letter-spacing:0.34px">18°C</div>
<div class="t" style="left:322.86px;width:80px;text-align:center;top:106.26px;font-size:5.6px;line-height:5.6px;color:#1c1c1c;letter-spacing:0.34px">N 5m/s</div>
<div class="t" style="left:322.86px;width:80px;text-align:center;top:113.11px;font-size:5.6px;line-height:5.6px;color:#1c1c1c;letter-spacing:0.34px">33,000m</div>
<div class="t" style="left:322.86px;width:80px;text-align:center;top:119.96px;font-size:5.6px;line-height:5.6px;color:#1c1c1c;letter-spacing:0.34px">55%</div>
<div class="t" style="left:322.86px;width:80px;text-align:center;top:126.81px;font-size:5.6px;line-height:5.6px;color:#1c1c1c;letter-spacing:0.34px">1650m</div>
<svg style="left:426.3625px;top:76.85000000000002px;overflow:visible" width="20" height="20"><g transform="translate(10,10)"><g fill="#1c1c1c" stroke="#1c1c1c" stroke-width="2.70"><circle cx="-5.00" cy="2.45" r="1.72"/><circle cx="-0.20" cy="-1.00" r="3.28"/><circle cx="5.20" cy="2.50" r="1.68"/><path stroke-linejoin="round" d="M-5.00,2.45 L-0.20,-1.00 L5.20,2.50 L5.20,4.17 L-5.00,4.17 Z"/></g><g fill="#acd0e6"><circle cx="-5.00" cy="2.45" r="1.72"/><circle cx="-0.20" cy="-1.00" r="3.28"/><circle cx="5.20" cy="2.50" r="1.68"/><path stroke-linejoin="round" d="M-5.00,2.45 L-0.20,-1.00 L5.20,2.50 L5.20,4.17 L-5.00,4.17 Z"/></g></g></svg>
<div class="t" style="left:397.23px;width:80px;text-align:center;top:99.41px;font-size:5.6px;line-height:5.6px;color:#1c1c1c;letter-spacing:0.34px">16°C</div>
<div class="t" style="left:397.23px;width:80px;text-align:center;top:106.26px;font-size:5.6px;line-height:5.6px;color:#1c1c1c;letter-spacing:0.34px">N 4m/s</div>
<div class="t" style="left:397.23px;width:80px;text-align:center;top:113.11px;font-size:5.6px;line-height:5.6px;color:#1c1c1c;letter-spacing:0.34px">33,000m</div>
<div class="t" style="left:397.23px;width:80px;text-align:center;top:119.96px;font-size:5.6px;line-height:5.6px;color:#1c1c1c;letter-spacing:0.34px">100%</div>
<div class="t" style="left:397.23px;width:80px;text-align:center;top:126.81px;font-size:5.6px;line-height:5.6px;color:#1c1c1c;letter-spacing:0.34px">1830m</div>
<svg style="left:500.73749999999995px;top:76.85000000000002px;overflow:visible" width="20" height="20"><g transform="translate(10,10)"><circle cx="0" cy="0" r="3.55" fill="none" stroke="#1c1c1c" stroke-width="1.45"/><path d="M6.00,0.00 L7.60,0.00 M4.24,4.24 L5.37,5.37 M0.00,6.00 L0.00,7.60 M-4.24,4.24 L-5.37,5.37 M-6.00,0.00 L-7.60,0.00 M-4.24,-4.24 L-5.37,-5.37 M-0.00,-6.00 L-0.00,-7.60 M4.24,-4.24 L5.37,-5.37" stroke="#1c1c1c" stroke-width="1.6" stroke-linecap="round"/></g></svg>
<div class="t" style="left:471.61px;width:80px;text-align:center;top:99.41px;font-size:5.6px;line-height:5.6px;color:#1c1c1c;letter-spacing:0.34px">16°C</div>
<div class="t" style="left:471.61px;width:80px;text-align:center;top:106.26px;font-size:5.6px;line-height:5.6px;color:#1c1c1c;letter-spacing:0.34px">N 4m/s</div>
<div class="t" style="left:471.61px;width:80px;text-align:center;top:113.11px;font-size:5.6px;line-height:5.6px;color:#1c1c1c;letter-spacing:0.34px">24,500m</div>
<div class="t" style="left:471.61px;width:80px;text-align:center;top:119.96px;font-size:5.6px;line-height:5.6px;color:#1c1c1c;letter-spacing:0.34px">100%</div>
<div class="t" style="left:471.61px;width:80px;text-align:center;top:126.81px;font-size:5.6px;line-height:5.6px;color:#1c1c1c;letter-spacing:0.34px">- m</div>
<svg style="left:575.1125px;top:76.85000000000002px;overflow:visible" width="20" height="20"><g transform="translate(10,10)"><circle cx="0" cy="0" r="3.55" fill="none" stroke="#1c1c1c" stroke-width="1.45"/><path d="M6.00,0.00 L7.60,0.00 M4.24,4.24 L5.37,5.37 M0.00,6.00 L0.00,7.60 M-4.24,4.24 L-5.37,5.37 M-6.00,0.00 L-7.60,0.00 M-4.24,-4.24 L-5.37,-5.37 M-0.00,-6.00 L-0.00,-7.60 M4.24,-4.24 L5.37,-5.37" stroke="#1c1c1c" stroke-width="1.6" stroke-linecap="round"/></g></svg>
<div class="t" style="left:545.98px;width:80px;text-align:center;top:99.41px;font-size:5.6px;line-height:5.6px;color:#1c1c1c;letter-spacing:0.34px">18°C</div>
<div class="t" style="left:545.98px;width:80px;text-align:center;top:106.26px;font-size:5.6px;line-height:5.6px;color:#1c1c1c;letter-spacing:0.34px">NE 4m/s</div>
<div class="t" style="left:545.98px;width:80px;text-align:center;top:113.11px;font-size:5.6px;line-height:5.6px;color:#1c1c1c;letter-spacing:0.34px">16,000m</div>
<div class="t" style="left:545.98px;width:80px;text-align:center;top:119.96px;font-size:5.6px;line-height:5.6px;color:#1c1c1c;letter-spacing:0.34px">100%</div>
<div class="t" style="left:545.98px;width:80px;text-align:center;top:126.81px;font-size:5.6px;line-height:5.6px;color:#1c1c1c;letter-spacing:0.34px">- m</div>
<svg style="left:649.4875px;top:76.85000000000002px;overflow:visible" width="20" height="20"><g transform="translate(10,10)"><circle cx="0" cy="0" r="3.55" fill="none" stroke="#1c1c1c" stroke-width="1.45"/><path d="M6.00,0.00 L7.60,0.00 M4.24,4.24 L5.37,5.37 M0.00,6.00 L0.00,7.60 M-4.24,4.24 L-5.37,5.37 M-6.00,0.00 L-7.60,0.00 M-4.24,-4.24 L-5.37,-5.37 M-0.00,-6.00 L-0.00,-7.60 M4.24,-4.24 L5.37,-5.37" stroke="#1c1c1c" stroke-width="1.6" stroke-linecap="round"/></g></svg>
<div class="t" style="left:620.36px;width:80px;text-align:center;top:99.41px;font-size:5.6px;line-height:5.6px;color:#1c1c1c;letter-spacing:0.34px">20°C</div>
<div class="t" style="left:620.36px;width:80px;text-align:center;top:106.26px;font-size:5.6px;line-height:5.6px;color:#1c1c1c;letter-spacing:0.34px">NE 4m/s</div>
<div class="t" style="left:620.36px;width:80px;text-align:center;top:113.11px;font-size:5.6px;line-height:5.6px;color:#1c1c1c;letter-spacing:0.34px">16,000m</div>
<div class="t" style="left:620.36px;width:80px;text-align:center;top:119.96px;font-size:5.6px;line-height:5.6px;color:#1c1c1c;letter-spacing:0.34px">100%</div>
<div class="t" style="left:620.36px;width:80px;text-align:center;top:126.81px;font-size:5.6px;line-height:5.6px;color:#1c1c1c;letter-spacing:0.34px">- m</div>
<svg style="left:54.4875px;top:132.60000000000002px;overflow:visible" width="20" height="20"><g transform="translate(10,10)"><g transform="translate(0.3,-0.5)"><path d="M0.99,-4.65 A4.75,4.75 0 1 0 4.7,-0.66 A3.6,3.6 0 0 1 0.99,-4.65 Z" fill="none" stroke="#e6e6f6" stroke-width="1.6" stroke-linejoin="round"/></g></g></svg>
<div class="t" style="left:25.36px;width:80px;text-align:center;top:155.16px;font-size:5.6px;line-height:5.6px;color:#e6e6f6;letter-spacing:0.34px">17°C</div>
<div class="t" style="left:25.36px;width:80px;text-align:center;top:162.01px;font-size:5.6px;line-height:5.6px;color:#e6e6f6;letter-spacing:0.34px">NE 7m/s</div>
<div class="t" style="left:25.36px;width:80px;text-align:center;top:168.86px;font-size:5.6px;line-height:5.6px;color:#e6e6f6;letter-spacing:0.34px">33,000m</div>
<div class="t" style="left:25.36px;width:80px;text-align:center;top:175.71px;font-size:5.6px;line-height:5.6px;color:#e6e6f6;letter-spacing:0.34px">20%</div>
<div class="t" style="left:25.36px;width:80px;text-align:center;top:182.56px;font-size:5.6px;line-height:5.6px;color:#e6e6f6;letter-spacing:0.34px">- m</div>
<svg style="left:128.8625px;top:132.60000000000002px;overflow:visible" width="20" height="20"><g transform="translate(10,10)"><g transform="translate(0.3,-0.5)"><path d="M0.99,-4.65 A4.75,4.75 0 1 0 4.7,-0.66 A3.6,3.6 0 0 1 0.99,-4.65 Z" fill="none" stroke="#e6e6f6" stroke-width="1.6" stroke-linejoin="round"/></g></g></svg>
<div class="t" style="left:99.73px;width:80px;text-align:center;top:155.16px;font-size:5.6px;line-height:5.6px;color:#e6e6f6;letter-spacing:0.34px">17°C</div>
<div class="t" style="left:99.73px;width:80px;text-align:center;top:162.01px;font-size:5.6px;line-height:5.6px;color:#e6e6f6;letter-spacing:0.34px">NE 6m/s</div>
<div class="t" style="left:99.73px;width:80px;text-align:center;top:168.86px;font-size:5.6px;line-height:5.6px;color:#e6e6f6;letter-spacing:0.34px">33,000m</div>
<div class="t" style="left:99.73px;width:80px;text-align:center;top:175.71px;font-size:5.6px;line-height:5.6px;color:#e6e6f6;letter-spacing:0.34px">20%</div>
<div class="t" style="left:99.73px;width:80px;text-align:center;top:182.56px;font-size:5.6px;line-height:5.6px;color:#e6e6f6;letter-spacing:0.34px">- m</div>
<svg style="left:203.2375px;top:132.60000000000002px;overflow:visible" width="20" height="20"><g transform="translate(10,10)"><g transform="translate(0.3,-0.5)"><path d="M0.99,-4.65 A4.75,4.75 0 1 0 4.7,-0.66 A3.6,3.6 0 0 1 0.99,-4.65 Z" fill="none" stroke="#e6e6f6" stroke-width="1.6" stroke-linejoin="round"/></g></g></svg>
<div class="t" style="left:174.11px;width:80px;text-align:center;top:155.16px;font-size:5.6px;line-height:5.6px;color:#e6e6f6;letter-spacing:0.34px">16°C</div>
<div class="t" style="left:174.11px;width:80px;text-align:center;top:162.01px;font-size:5.6px;line-height:5.6px;color:#e6e6f6;letter-spacing:0.34px">NE 6m/s</div>
<div class="t" style="left:174.11px;width:80px;text-align:center;top:168.86px;font-size:5.6px;line-height:5.6px;color:#e6e6f6;letter-spacing:0.34px">33,000m</div>
<div class="t" style="left:174.11px;width:80px;text-align:center;top:175.71px;font-size:5.6px;line-height:5.6px;color:#e6e6f6;letter-spacing:0.34px">20%</div>
<div class="t" style="left:174.11px;width:80px;text-align:center;top:182.56px;font-size:5.6px;line-height:5.6px;color:#e6e6f6;letter-spacing:0.34px">- m</div>
<svg style="left:277.6125px;top:132.60000000000002px;overflow:visible" width="20" height="20"><g transform="translate(10,10)"><g transform="translate(0.3,-0.5)"><path d="M0.99,-4.65 A4.75,4.75 0 1 0 4.7,-0.66 A3.6,3.6 0 0 1 0.99,-4.65 Z" fill="none" stroke="#e6e6f6" stroke-width="1.6" stroke-linejoin="round"/></g></g></svg>
<div class="t" style="left:248.48px;width:80px;text-align:center;top:155.16px;font-size:5.6px;line-height:5.6px;color:#e6e6f6;letter-spacing:0.34px">16°C</div>
<div class="t" style="left:248.48px;width:80px;text-align:center;top:162.01px;font-size:5.6px;line-height:5.6px;color:#e6e6f6;letter-spacing:0.34px">NE 6m/s</div>
<div class="t" style="left:248.48px;width:80px;text-align:center;top:168.86px;font-size:5.6px;line-height:5.6px;color:#e6e6f6;letter-spacing:0.34px">33,000m</div>
<div class="t" style="left:248.48px;width:80px;text-align:center;top:175.71px;font-size:5.6px;line-height:5.6px;color:#e6e6f6;letter-spacing:0.34px">0%</div>
<div class="t" style="left:248.48px;width:80px;text-align:center;top:182.56px;font-size:5.6px;line-height:5.6px;color:#e6e6f6;letter-spacing:0.34px">- m</div>
<svg style="left:351.9875px;top:132.60000000000002px;overflow:visible" width="20" height="20"><g transform="translate(10,10)"><circle cx="0" cy="0" r="3.55" fill="none" stroke="#1c1c1c" stroke-width="1.45"/><path d="M6.00,0.00 L7.60,0.00 M4.24,4.24 L5.37,5.37 M0.00,6.00 L0.00,7.60 M-4.24,4.24 L-5.37,5.37 M-6.00,0.00 L-7.60,0.00 M-4.24,-4.24 L-5.37,-5.37 M-0.00,-6.00 L-0.00,-7.60 M4.24,-4.24 L5.37,-5.37" stroke="#1c1c1c" stroke-width="1.6" stroke-linecap="round"/></g></svg>
<div class="t" style="left:322.86px;width:80px;text-align:center;top:155.16px;font-size:5.6px;line-height:5.6px;color:#1c1c1c;letter-spacing:0.34px">16°C</div>
<div class="t" style="left:322.86px;width:80px;text-align:center;top:162.01px;font-size:5.6px;line-height:5.6px;color:#1c1c1c;letter-spacing:0.34px">NE 7m/s</div>
<div class="t" style="left:322.86px;width:80px;text-align:center;top:168.86px;font-size:5.6px;line-height:5.6px;color:#1c1c1c;letter-spacing:0.34px">33,000m</div>
<div class="t" style="left:322.86px;width:80px;text-align:center;top:175.71px;font-size:5.6px;line-height:5.6px;color:#1c1c1c;letter-spacing:0.34px">50%</div>
<div class="t" style="left:322.86px;width:80px;text-align:center;top:182.56px;font-size:5.6px;line-height:5.6px;color:#1c1c1c;letter-spacing:0.34px">- m</div>
<svg style="left:426.3625px;top:132.60000000000002px;overflow:visible" width="20" height="20"><g transform="translate(10,10)"><circle cx="0" cy="0" r="3.55" fill="none" stroke="#1c1c1c" stroke-width="1.45"/><path d="M6.00,0.00 L7.60,0.00 M4.24,4.24 L5.37,5.37 M0.00,6.00 L0.00,7.60 M-4.24,4.24 L-5.37,5.37 M-6.00,0.00 L-7.60,0.00 M-4.24,-4.24 L-5.37,-5.37 M-0.00,-6.00 L-0.00,-7.60 M4.24,-4.24 L5.37,-5.37" stroke="#1c1c1c" stroke-width="1.6" stroke-linecap="round"/></g></svg>
<div class="t" style="left:397.23px;width:80px;text-align:center;top:155.16px;font-size:5.6px;line-height:5.6px;color:#1c1c1c;letter-spacing:0.34px">15°C</div>
<div class="t" style="left:397.23px;width:80px;text-align:center;top:162.01px;font-size:5.6px;line-height:5.6px;color:#1c1c1c;letter-spacing:0.34px">NE 7m/s</div>
<div class="t" style="left:397.23px;width:80px;text-align:center;top:168.86px;font-size:5.6px;line-height:5.6px;color:#1c1c1c;letter-spacing:0.34px">33,000m</div>
<div class="t" style="left:397.23px;width:80px;text-align:center;top:175.71px;font-size:5.6px;line-height:5.6px;color:#1c1c1c;letter-spacing:0.34px">100%</div>
<div class="t" style="left:397.23px;width:80px;text-align:center;top:182.56px;font-size:5.6px;line-height:5.6px;color:#1c1c1c;letter-spacing:0.34px">- m</div>
<svg style="left:500.73749999999995px;top:132.60000000000002px;overflow:visible" width="20" height="20"><g transform="translate(10,10)"><circle cx="0" cy="0" r="3.55" fill="none" stroke="#1c1c1c" stroke-width="1.45"/><path d="M6.00,0.00 L7.60,0.00 M4.24,4.24 L5.37,5.37 M0.00,6.00 L0.00,7.60 M-4.24,4.24 L-5.37,5.37 M-6.00,0.00 L-7.60,0.00 M-4.24,-4.24 L-5.37,-5.37 M-0.00,-6.00 L-0.00,-7.60 M4.24,-4.24 L5.37,-5.37" stroke="#1c1c1c" stroke-width="1.6" stroke-linecap="round"/></g></svg>
<div class="t" style="left:471.61px;width:80px;text-align:center;top:155.16px;font-size:5.6px;line-height:5.6px;color:#1c1c1c;letter-spacing:0.34px">16°C</div>
<div class="t" style="left:471.61px;width:80px;text-align:center;top:162.01px;font-size:5.6px;line-height:5.6px;color:#1c1c1c;letter-spacing:0.34px">E 8m/s</div>
<div class="t" style="left:471.61px;width:80px;text-align:center;top:168.86px;font-size:5.6px;line-height:5.6px;color:#1c1c1c;letter-spacing:0.34px">24,500m</div>
<div class="t" style="left:471.61px;width:80px;text-align:center;top:175.71px;font-size:5.6px;line-height:5.6px;color:#1c1c1c;letter-spacing:0.34px">100%</div>
<div class="t" style="left:471.61px;width:80px;text-align:center;top:182.56px;font-size:5.6px;line-height:5.6px;color:#1c1c1c;letter-spacing:0.34px">- m</div>
<svg style="left:575.1125px;top:132.60000000000002px;overflow:visible" width="20" height="20"><g transform="translate(10,10)"><circle cx="0" cy="0" r="3.55" fill="none" stroke="#1c1c1c" stroke-width="1.45"/><path d="M6.00,0.00 L7.60,0.00 M4.24,4.24 L5.37,5.37 M0.00,6.00 L0.00,7.60 M-4.24,4.24 L-5.37,5.37 M-6.00,0.00 L-7.60,0.00 M-4.24,-4.24 L-5.37,-5.37 M-0.00,-6.00 L-0.00,-7.60 M4.24,-4.24 L5.37,-5.37" stroke="#1c1c1c" stroke-width="1.6" stroke-linecap="round"/></g></svg>
<div class="t" style="left:545.98px;width:80px;text-align:center;top:155.16px;font-size:5.6px;line-height:5.6px;color:#1c1c1c;letter-spacing:0.34px">16°C</div>
<div class="t" style="left:545.98px;width:80px;text-align:center;top:162.01px;font-size:5.6px;line-height:5.6px;color:#1c1c1c;letter-spacing:0.34px">E 8m/s</div>
<div class="t" style="left:545.98px;width:80px;text-align:center;top:168.86px;font-size:5.6px;line-height:5.6px;color:#1c1c1c;letter-spacing:0.34px">16,000m</div>
<div class="t" style="left:545.98px;width:80px;text-align:center;top:175.71px;font-size:5.6px;line-height:5.6px;color:#1c1c1c;letter-spacing:0.34px">100%</div>
<div class="t" style="left:545.98px;width:80px;text-align:center;top:182.56px;font-size:5.6px;line-height:5.6px;color:#1c1c1c;letter-spacing:0.34px">- m</div>
<svg style="left:649.4875px;top:132.60000000000002px;overflow:visible" width="20" height="20"><g transform="translate(10,10)"><circle cx="0" cy="0" r="3.55" fill="none" stroke="#1c1c1c" stroke-width="1.45"/><path d="M6.00,0.00 L7.60,0.00 M4.24,4.24 L5.37,5.37 M0.00,6.00 L0.00,7.60 M-4.24,4.24 L-5.37,5.37 M-6.00,0.00 L-7.60,0.00 M-4.24,-4.24 L-5.37,-5.37 M-0.00,-6.00 L-0.00,-7.60 M4.24,-4.24 L5.37,-5.37" stroke="#1c1c1c" stroke-width="1.6" stroke-linecap="round"/></g></svg>
<div class="t" style="left:620.36px;width:80px;text-align:center;top:155.16px;font-size:5.6px;line-height:5.6px;color:#1c1c1c;letter-spacing:0.34px">17°C</div>
<div class="t" style="left:620.36px;width:80px;text-align:center;top:162.01px;font-size:5.6px;line-height:5.6px;color:#1c1c1c;letter-spacing:0.34px">E 8m/s</div>
<div class="t" style="left:620.36px;width:80px;text-align:center;top:168.86px;font-size:5.6px;line-height:5.6px;color:#1c1c1c;letter-spacing:0.34px">16,000m</div>
<div class="t" style="left:620.36px;width:80px;text-align:center;top:175.71px;font-size:5.6px;line-height:5.6px;color:#1c1c1c;letter-spacing:0.34px">100%</div>
<div class="t" style="left:620.36px;width:80px;text-align:center;top:182.56px;font-size:5.6px;line-height:5.6px;color:#1c1c1c;letter-spacing:0.34px">- m</div>
<div class="t" style="left:-23.60px;width:80px;text-align:center;top:8.11px;font-size:5.3px;line-height:5.3px;font-weight:bold;letter-spacing:0.45px;color:#c8c8c8">DATE/</div>
<div class="t" style="left:-23.60px;width:80px;text-align:center;top:16.11px;font-size:5.3px;line-height:5.3px;font-weight:bold;letter-spacing:0.45px;color:#c8c8c8">HOUR</div>
<div class="t" style="left:-23.60px;width:80px;text-align:center;top:191.91px;font-size:5.3px;line-height:5.3px;font-weight:bold;letter-spacing:0.45px;color:#c8c8c8">DATE/</div>
<div class="t" style="left:-23.60px;width:80px;text-align:center;top:199.41px;font-size:5.3px;line-height:5.3px;font-weight:bold;letter-spacing:0.45px;color:#c8c8c8">HOUR</div>
<div class="t" style="left:25.46px;width:80px;text-align:center;top:11.54px;font-size:5.5px;line-height:5.5px;letter-spacing:0.55px;color:#d2d2d2">0:00</div>
<div class="t" style="left:25.46px;width:80px;text-align:center;top:194.94px;font-size:5.5px;line-height:5.5px;letter-spacing:0.55px;color:#d2d2d2">0:00</div>
<div class="t" style="left:99.83px;width:80px;text-align:center;top:11.54px;font-size:5.5px;line-height:5.5px;letter-spacing:0.55px;color:#d2d2d2">1:00</div>
<div class="t" style="left:99.83px;width:80px;text-align:center;top:194.94px;font-size:5.5px;line-height:5.5px;letter-spacing:0.55px;color:#d2d2d2">1:00</div>
<div class="t" style="left:174.21px;width:80px;text-align:center;top:11.54px;font-size:5.5px;line-height:5.5px;letter-spacing:0.55px;color:#d2d2d2">2:00</div>
<div class="t" style="left:174.21px;width:80px;text-align:center;top:194.94px;font-size:5.5px;line-height:5.5px;letter-spacing:0.55px;color:#d2d2d2">2:00</div>
<div class="t" style="left:248.58px;width:80px;text-align:center;top:11.54px;font-size:5.5px;line-height:5.5px;letter-spacing:0.55px;color:#d2d2d2">3:00</div>
<div class="t" style="left:248.58px;width:80px;text-align:center;top:194.94px;font-size:5.5px;line-height:5.5px;letter-spacing:0.55px;color:#d2d2d2">3:00</div>
<div class="t" style="left:322.96px;width:80px;text-align:center;top:11.54px;font-size:5.5px;line-height:5.5px;letter-spacing:0.55px;color:#d2d2d2">4:00</div>
<div class="t" style="left:322.96px;width:80px;text-align:center;top:194.94px;font-size:5.5px;line-height:5.5px;letter-spacing:0.55px;color:#d2d2d2">4:00</div>
<div class="t" style="left:397.33px;width:80px;text-align:center;top:11.54px;font-size:5.5px;line-height:5.5px;letter-spacing:0.55px;color:#d2d2d2">5:00</div>
<div class="t" style="left:397.33px;width:80px;text-align:center;top:194.94px;font-size:5.5px;line-height:5.5px;letter-spacing:0.55px;color:#d2d2d2">5:00</div>
<div class="t" style="left:471.71px;width:80px;text-align:center;top:11.54px;font-size:5.5px;line-height:5.5px;letter-spacing:0.55px;color:#d2d2d2">6:00</div>
<div class="t" style="left:471.71px;width:80px;text-align:center;top:194.94px;font-size:5.5px;line-height:5.5px;letter-spacing:0.55px;color:#d2d2d2">6:00</div>
<div class="t" style="left:546.08px;width:80px;text-align:center;top:11.54px;font-size:5.5px;line-height:5.5px;letter-spacing:0.55px;color:#d2d2d2">7:00</div>
<div class="t" style="left:546.08px;width:80px;text-align:center;top:194.94px;font-size:5.5px;line-height:5.5px;letter-spacing:0.55px;color:#d2d2d2">7:00</div>
<div class="t" style="left:620.46px;width:80px;text-align:center;top:11.54px;font-size:5.5px;line-height:5.5px;letter-spacing:0.55px;color:#d2d2d2">8:00</div>
<div class="t" style="left:620.46px;width:80px;text-align:center;top:194.94px;font-size:5.5px;line-height:5.5px;letter-spacing:0.55px;color:#d2d2d2">8:00</div>
<div class="t" style="left:-23.60px;width:80px;text-align:center;top:39.91px;font-size:5.3px;line-height:5.3px;font-weight:bold;letter-spacing:0.45px;color:#c8c8c8">2010</div>
<div class="t" style="left:-23.60px;width:80px;text-align:center;top:47.61px;font-size:5.3px;line-height:5.3px;font-weight:bold;letter-spacing:0.45px;color:#c8c8c8">JUL</div>
<div class="t" style="left:-23.60px;width:80px;text-align:center;top:55.31px;font-size:5.3px;line-height:5.3px;font-weight:bold;letter-spacing:0.45px;color:#c8c8c8">01</div>
<div class="t" style="left:-23.60px;width:80px;text-align:center;top:95.66px;font-size:5.3px;line-height:5.3px;font-weight:bold;letter-spacing:0.45px;color:#c8c8c8">2010</div>
<div class="t" style="left:-23.60px;width:80px;text-align:center;top:103.36px;font-size:5.3px;line-height:5.3px;font-weight:bold;letter-spacing:0.45px;color:#c8c8c8">JUL</div>
<div class="t" style="left:-23.60px;width:80px;text-align:center;top:111.06px;font-size:5.3px;line-height:5.3px;font-weight:bold;letter-spacing:0.45px;color:#c8c8c8">02</div>
<div class="t" style="left:-23.60px;width:80px;text-align:center;top:151.41px;font-size:5.3px;line-height:5.3px;font-weight:bold;letter-spacing:0.45px;color:#c8c8c8">2010</div>
<div class="t" style="left:-23.60px;width:80px;text-align:center;top:159.11px;font-size:5.3px;line-height:5.3px;font-weight:bold;letter-spacing:0.45px;color:#c8c8c8">JUL</div>
<div class="t" style="left:-23.60px;width:80px;text-align:center;top:166.81px;font-size:5.3px;line-height:5.3px;font-weight:bold;letter-spacing:0.45px;color:#c8c8c8">03</div>
</div>
<div class="t" style="left:18.4px;top:385.14px;font-size:5.5px;line-height:5.5px;color:#c4c4c4;letter-spacing:0.505px">*: Hour on next day (to cover a 24 hour scenario starting at the end of the given day).</div>
<div class="t" style="left:18.4px;top:391.94px;font-size:5.5px;line-height:5.5px;color:#c4c4c4;letter-spacing:0.563px">Hourly weather consists of summary, temperature, wind, visual range, illumination and cloud ceiling.</div>
<div style="left:13.5px;top:417px;width:656.5px;height:7px;background:#444"></div>
<div style="left:14px;top:417px;width:7px;height:6.7px;background:#6a6a6a"></div>
<svg style="left:14px;top:417px" width="7" height="7"><path d="M2 3.4 L4.6 1.6 L4.6 5.2 Z" fill="#ddd"/></svg>
<div style="left:22px;top:417px;width:118px;height:6.7px;background:#6c6e68;border-radius:1px"></div>
<div style="left:662px;top:417px;width:7px;height:6.7px;background:#6a6a6a"></div>
<svg style="left:662px;top:417px" width="7" height="7"><path d="M5 3.4 L2.4 1.6 L2.4 5.2 Z" fill="#ddd"/></svg>
<div style="left:548.2px;top:432.3px;width:50.19999999999993px;height:12.2px;border:1px solid #2f2f2f;border-radius:2px;box-sizing:border-box;background:#4a4a4a;box-shadow:inset 0 0 0 1px #5a5a5a"></div>
<div class="t" style="left:533.3px;width:80px;text-align:center;top:436.99px;font-size:5.8px;line-height:5.8px;color:#dcdcdc">Proceed</div>
<div style="left:602px;top:432.3px;width:51.39999999999998px;height:12.2px;border:1px solid #2f2f2f;border-radius:2px;box-sizing:border-box;background:#4a4a4a;box-shadow:inset 0 0 0 1px #5a5a5a"></div>
<div class="t" style="left:587.7px;width:80px;text-align:center;top:436.99px;font-size:5.8px;line-height:5.8px;color:#dcdcdc">Cancel</div>
<svg style="left:668px;top:440px" width="8" height="8"><path d="M7 1 L1 7 M7 3.5 L3.5 7 M7 6 L6 7" stroke="#5e5e5e" stroke-width="0.8"/></svg>
</body></html>
